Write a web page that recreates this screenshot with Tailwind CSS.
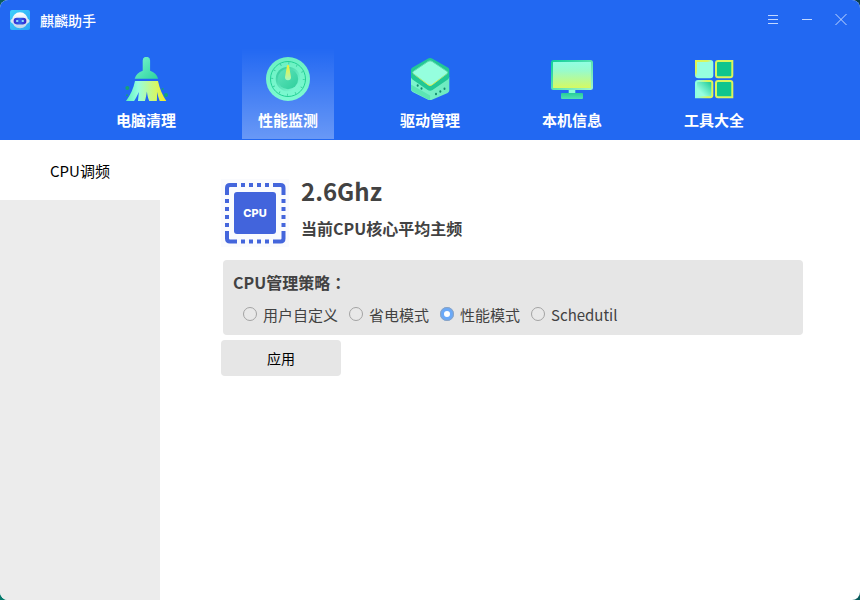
<!DOCTYPE html>
<html lang="zh-CN">
<head>
<meta charset="utf-8">
<meta name="viewport" content="width=device-width, initial-scale=1">
<title>麒麟助手</title>
<script src="https://cdn.jsdelivr.net/npm/@tailwindcss/browser@4"></script>
</head>
<body class="bg-linear-to-tr from-[#047a6c] to-[#0b3d4c] font-['Noto_Sans_CJK_SC',sans-serif]">
<div class="flex min-h-screen flex-col overflow-hidden rounded-lg bg-white">
  <header class="bg-[#2268f2] text-white">
    <div class="flex h-10 items-center justify-between pr-[7px] pl-2.5">
      <div class="flex items-center gap-2.5">
        <svg class="size-5" viewBox="0 0 20 20" aria-hidden="true">
          <defs>
            <linearGradient id="lg" x1="0" y1="0" x2="1" y2="1"><stop offset="0" stop-color="#3fd0fa"/><stop offset="1" stop-color="#2ba4f8"/></linearGradient>
            <linearGradient id="lh" x1="0" y1="0" x2="0" y2="1"><stop offset="0" stop-color="#fff"/><stop offset="1" stop-color="#bcd3ea"/></linearGradient>
            <linearGradient id="lv" x1="0" y1="0" x2="1" y2="0"><stop offset="0" stop-color="#3a2bd0"/><stop offset=".5" stop-color="#2a62ee"/><stop offset="1" stop-color="#3a20c8"/></linearGradient>
          </defs>
          <rect width="20" height="20" rx="2" fill="url(#lg)"/>
          <ellipse cx="10" cy="11" rx="9.6" ry="4" fill="#d3e4f5"/>
          <ellipse cx="10" cy="10.3" rx="8" ry="8" fill="url(#lh)"/>
          <rect x="3.6" y="7.8" width="12.8" height="6.6" rx="3.3" fill="url(#lv)"/>
          <ellipse cx="7.2" cy="11" rx="1.3" ry="1" fill="#8fe6ff"/>
          <ellipse cx="12.8" cy="11" rx="1.3" ry="1" fill="#8fe6ff"/>
        </svg>
        <h1 class="text-sm font-medium">麒麟助手</h1>
      </div>
      <div class="flex gap-2.5 text-[#c3d8ff]">
        <button type="button" aria-label="菜单" class="grid size-6 place-items-center">
          <svg class="size-4" viewBox="0 0 16 16" stroke="currentColor" fill="none"><path d="M3 3.5h10M3 7.5h10M3 11.5h10"/></svg>
        </button>
        <button type="button" aria-label="最小化" class="grid size-6 place-items-center">
          <svg class="size-4" viewBox="0 0 16 16" stroke="currentColor" fill="none"><path d="M3 7.5h10"/></svg>
        </button>
        <button type="button" aria-label="关闭" class="grid size-6 place-items-center">
          <svg class="size-4" viewBox="0 0 16 16" stroke="currentColor" fill="none"><path d="M2.500 2l11 11M13.500 2l-11 11"/></svg>
        </button>
      </div>
    </div>

    <nav class="flex justify-center gap-[50px] pt-2 pb-px text-[15px] leading-5 font-bold">
      <a href="#" class="flex h-[91px] w-[92px] flex-col items-center gap-[9px] pt-[9px]">
        <svg class="size-11" viewBox="0 0 44 44" aria-hidden="true">
          <defs>
            <linearGradient id="b1" x1="0" y1="0" x2="1" y2="1"><stop offset="0" stop-color="#7df5d0"/><stop offset="1" stop-color="#2bd49e"/></linearGradient>
            <linearGradient id="b2" x1="0" y1="0" x2="1" y2="0"><stop offset="0" stop-color="#5df0bf"/><stop offset=".3" stop-color="#96ffe0"/><stop offset=".75" stop-color="#d6f765"/><stop offset="1" stop-color="#f6ea21"/></linearGradient>
          </defs>
          <path d="M18.7 3.5a3.7 3.7 0 0 1 7.4 0v10.2c4 1.200 7 4.300 8 8H10.700c1-3.700 4-6.800 8-8z" fill="url(#b1)"/>
          <path d="M11 24h23c1.500 7.500 4.500 14.500 8.300 20h-6.600c-1.200-2.800-2-6-2.500-9-.2 3.400-.1 6-.4 9h-7.600c-1.200-3-1.900-6-2.300-9.500-.6 3.500-1 6.500-2 9.500h-6.900c.3-3 .5-5.500.8-9-1.400 3.400-2.900 6.500-4.700 9H2c4.300-5.500 7.500-12.500 9-20z" fill="url(#b2)"/>
          <g fill="#14a277"><circle cx="3.300" cy="31" r="2"/><circle cx="3" cy="38.300" r="1"/><circle cx="38.700" cy="32" r="1"/><circle cx="42" cy="38" r="2"/></g>
        </svg>
        <span>电脑清理</span>
      </a>
      <a href="#" aria-current="page" class="flex h-[91px] w-[92px] flex-col items-center gap-[9px] bg-linear-to-b from-white/0 to-white/32 pt-[9px]">
        <svg class="size-11" viewBox="0 0 44 44" aria-hidden="true">
          <defs>
            <linearGradient id="d1" x1="0" y1="0" x2="0" y2="1"><stop offset="0" stop-color="#6cf0c2"/><stop offset="1" stop-color="#7dfad2"/></linearGradient>
            <linearGradient id="d2" x1="0" y1="0" x2="1" y2="1"><stop offset="0" stop-color="#2cc896"/><stop offset="1" stop-color="#8cffdc"/></linearGradient>
            <linearGradient id="d3" x1="0" y1="0" x2="0" y2="1"><stop offset="0" stop-color="#f5ee2c"/><stop offset="1" stop-color="#a6f8c0"/></linearGradient>
            <linearGradient id="d4" x1="0" y1="0" x2="1" y2="1"><stop offset="0" stop-color="#5fe4bb"/><stop offset="1" stop-color="#2fcf9c"/></linearGradient>
          </defs>
          <circle cx="22" cy="22" r="22" fill="url(#d1)"/>
          <circle cx="22" cy="22" r="17.500" fill="none" stroke="#22d195"/>
          <circle cx="22" cy="22" r="15.800" fill="none" stroke="#35c99a" stroke-width="2" stroke-dasharray=".8 7.473"/>
          <circle cx="22" cy="22" r="12.300" fill="url(#d2)"/>
          <circle cx="22" cy="22" r="10.200" fill="url(#d4)"/>
          <path d="M22 8c.6 0 1 .5 1.100 1.200l1.900 11a3 3 0 1 1-6 0l1.900-11c.1-.7.5-1.200 1.100-1.200z" fill="url(#d3)"/>
        </svg>
        <span>性能监测</span>
      </a>
      <a href="#" class="flex h-[91px] w-[92px] flex-col items-center gap-[9px] pt-[9px]">
        <svg class="size-11" viewBox="0 0 44 44" aria-hidden="true">
          <defs>
            <linearGradient id="x1" x1="0" y1="0" x2="1" y2="0"><stop offset="0" stop-color="#7df5cd"/><stop offset="1" stop-color="#6deabf"/></linearGradient>
            <linearGradient id="x2" x1="0" y1="0" x2="0" y2="1"><stop offset=".4" stop-color="#5fdcae"/><stop offset="1" stop-color="#f1ee3b"/></linearGradient>
          </defs>
          <path d="M3 20l19 12 19.300-12v13c0 1.300-.6 2.300-1.600 2.900l-15.200 6.500c-1.500.9-3.300.9-4.800 0L4.600 34.900C3.600 34.300 3 33.300 3 32z" fill="url(#x1)"/>
          <path d="M3 27.500l19.100 11v4.500c-.8 0-1.700-.2-2.400-.7L4.600 34.300C3.600 33.700 3 32.700 3 31.500z" fill="#5ce5b4"/>
          <path d="M19.700 1.700c1.500-.9 3.300-.9 4.800 0l15.300 8.700c.9.500 1.500 1.500 1.500 2.500v6.600c0 1.300-.6 2.300-1.500 2.900L24.500 33c-1.500.9-3.300.9-4.800 0L4.500 22.400C3.600 21.800 3 20.800 3 19.500v-6.600c0-1 .6-2 1.500-2.500z" fill="#22c795"/>
          <path d="M20 4.500c1.300-.8 2.900-.8 4.200 0l14.500 9.700c1.100.7 1.100 2 0 2.700L24.200 27.700c-1.300.9-2.900.9-4.200 0L5.600 16.900c-1.100-.7-1.100-2 0-2.700z" fill="#95ffde" stroke="url(#x2)"/>
          <g fill="#138c70"><ellipse cx="9.700" cy="28.500" rx="1" ry="1.300"/><ellipse cx="13.500" cy="31.500" rx="1" ry="1.300"/><ellipse cx="28" cy="37" rx="1" ry="1.300"/><ellipse cx="32.300" cy="34.500" rx="1" ry="1.300"/><ellipse cx="36.500" cy="31.700" rx="1" ry="1.300"/></g>
        </svg>
        <span>驱动管理</span>
      </a>
      <a href="#" class="flex h-[91px] w-[92px] flex-col items-center gap-[9px] pt-[9px]">
        <svg class="size-11" viewBox="0 0 44 44" aria-hidden="true">
          <defs>
            <linearGradient id="m1" x1="0" y1="0" x2="0" y2="1"><stop offset="0" stop-color="#90ffe5"/><stop offset=".35" stop-color="#98fbcb"/><stop offset="1" stop-color="#d9fa5c"/></linearGradient>
            <linearGradient id="m2" x1="0" y1="0" x2="1" y2="1"><stop offset="0" stop-color="#12cf99"/><stop offset="1" stop-color="#9df5c9"/></linearGradient>
            <linearGradient id="m3" x1="0" y1="0" x2="0" y2="1"><stop offset="0" stop-color="#27cd9a"/><stop offset="1" stop-color="#4fe2b5"/></linearGradient>
          </defs>
          <path d="M18.700 32h6.600v5h-6.600z" fill="#8affd9"/>
          <rect x="2" y="4" width="40" height="28" rx="1.500" fill="url(#m1)" stroke="url(#m2)" stroke-width="2"/>
          <rect x="11" y="36" width="22" height="6" rx="1" fill="url(#m3)"/>
        </svg>
        <span>本机信息</span>
      </a>
      <a href="#" class="flex h-[91px] w-[92px] flex-col items-center gap-[9px] pt-[9px]">
        <svg class="size-11" viewBox="0 0 44 44" aria-hidden="true">
          <defs>
            <linearGradient id="g1" x1="0" y1="0" x2="1" y2="1"><stop offset="0" stop-color="#e2f64d"/><stop offset=".35" stop-color="#d6f663"/><stop offset=".5" stop-color="#96ffdf"/></linearGradient>
            <linearGradient id="g2" x1="0" y1="1" x2="1" y2="0"><stop offset=".3" stop-color="#96ffdf"/><stop offset="1" stop-color="#12c58e"/></linearGradient>
            <linearGradient id="g3" x1="0" y1="0" x2="1" y2="0"><stop offset=".1" stop-color="#90ffdd"/><stop offset=".7" stop-color="#d9f65c"/></linearGradient>
          </defs>
          <g stroke-width="2">
            <path d="M4 4h14.300q2 0 2 2v12.300q0 2-2 2H6.500q-2.500 0-2.500-2z" fill="#96ffdf" stroke="url(#g1)"/>
            <path d="M40.300 4H26q-2 0-2 2v12.300q0 2 2 2h12.300q2 0 2-2z" fill="#0fc58d" stroke="#d9f65c"/>
            <path d="M4 40.300V26q0-2 2-2h12.300q2 0 2 2v12.300q0 2-2 2z" fill="url(#g2)" stroke="url(#g3)"/>
            <path d="M40.300 40.300H26q-2 0-2-2V26q0-2 2-2h12.300q2 0 2 2z" fill="#0fc58d" stroke="#d9f65c"/>
          </g>
        </svg>
        <span>工具大全</span>
      </a>
    </nav>
  </header>

  <div class="flex flex-1">
    <aside class="w-40 shrink-0 bg-[#ececec]">
      <a href="#" aria-current="page" class="flex h-15 items-center justify-center bg-white pt-0.5 text-[15px] text-black">CPU调频</a>
    </aside>
    <main class="flex-1 pt-[39px] pr-[57px] pl-[61px] text-[#424242]">
      <section class="flex gap-3">
        <svg class="size-[68px] shrink-0" viewBox="0 0 68 68" aria-hidden="true">
          <rect width="68" height="68" fill="#fafbfe"/>
          <g fill="none" stroke="#4466dc" stroke-width="4">
            <path d="M16 6H9q-3 0-3 3v7M52 6h7.500q3 0 3 3v7M16 62.500H9q-3 0-3-3V52M52 62.500h7.500q3 0 3-3V52"/>
            <path stroke-dasharray="4" d="M20 6h28M20 62.500h28M6 20v28M62.500 20v28"/>
          </g>
          <rect x="13" y="13" width="42" height="42" rx="3" fill="#4264dc"/>
          <text x="34" y="38" text-anchor="middle" font-family="Inter, sans-serif" font-weight="800" font-size="11" fill="#fff">CPU</text>
        </svg>
        <div>
          <p class="text-2xl leading-6 font-bold">2.6Ghz</p>
          <p class="mt-[13px] text-base font-bold">当前CPU核心平均主频</p>
        </div>
      </section>

      <form>
        <fieldset class="mt-[13px] ml-0.5 rounded bg-[#e6e6e6] px-2.5 pt-2.5 pb-[7px]">
          <legend class="float-left w-full text-base font-bold">CPU管理策略<span class="font-['Noto_Sans_CJK_TC',sans-serif]" lang="zh-TW">：</span></legend>
          <div class="clear-both flex flex-wrap gap-x-[11px] pt-2 pl-2.5 text-[15px] leading-[26px]">
            <label class="flex items-center gap-1.5"><input type="radio" name="policy" class="mb-0.5 size-3.5 appearance-none rounded-full border border-[#a3a3a3] bg-[#e8e8e8] checked:border-4 checked:border-[#6aa9f8] checked:bg-white checked:outline checked:-outline-offset-1 checked:outline-[#8fa3bd]">用户自定义</label>
            <label class="flex items-center gap-1.5"><input type="radio" name="policy" class="mb-0.5 size-3.5 appearance-none rounded-full border border-[#a3a3a3] bg-[#e8e8e8] checked:border-4 checked:border-[#6aa9f8] checked:bg-white checked:outline checked:-outline-offset-1 checked:outline-[#8fa3bd]">省电模式</label>
            <label class="flex items-center gap-1.5"><input type="radio" name="policy" checked class="mb-0.5 size-3.5 appearance-none rounded-full border border-[#a3a3a3] bg-[#e8e8e8] checked:border-4 checked:border-[#6aa9f8] checked:bg-white checked:outline checked:-outline-offset-1 checked:outline-[#8fa3bd]">性能模式</label>
            <label class="flex items-center gap-1.5"><input type="radio" name="policy" class="mb-0.5 size-3.5 appearance-none rounded-full border border-[#a3a3a3] bg-[#e8e8e8] checked:border-4 checked:border-[#6aa9f8] checked:bg-white checked:outline checked:-outline-offset-1 checked:outline-[#8fa3bd]">Schedutil</label>
          </div>
        </fieldset>
        <button type="button" class="mt-[5px] h-9 w-30 rounded bg-[#e6e6e6] text-sm text-black">应用</button>
      </form>
    </main>
  </div>
</div>
</body>
</html>
